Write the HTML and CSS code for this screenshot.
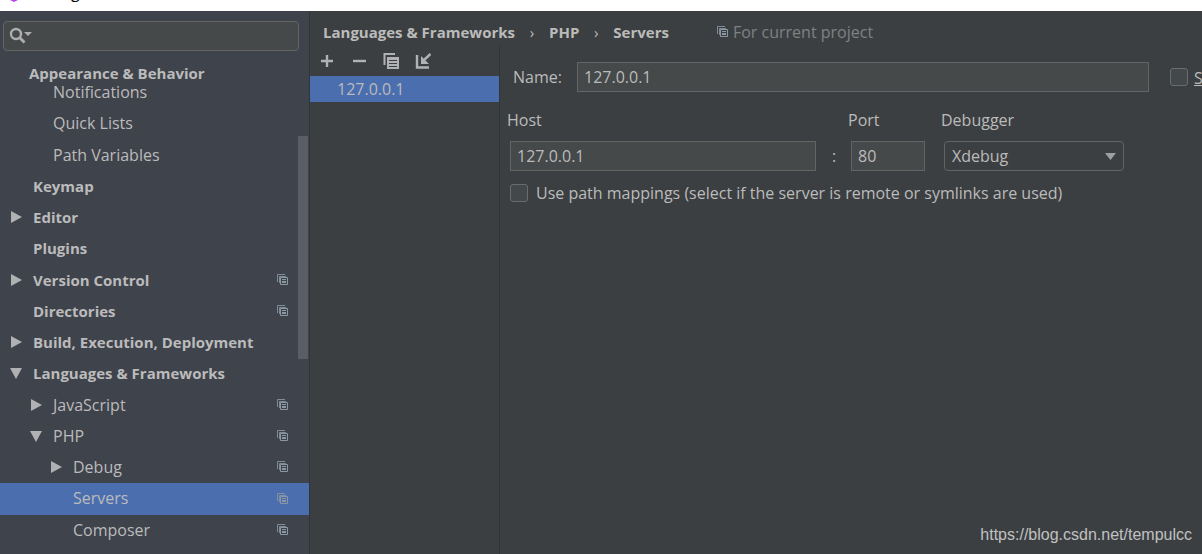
FILE: index.html
```html
<!DOCTYPE html>
<html lang="en">
<head>
<meta charset="utf-8">
<title>Settings</title>
<link rel="stylesheet" href="styles.css">
</head>
<body>
<svg class="defs" width="0" height="0" aria-hidden="true">
  <symbol id="scope" viewBox="0 0 11 11">
    <path d="M.5 8V.5H8M2.500 9V2.500H9" fill="none" stroke="currentColor" opacity=".85"/>
    <path d="M3.500 3.500h7v7h-7z" fill="none" stroke="currentColor"/>
    <path d="M5 5.500h4M5 7.500h4M5 8.500h4" stroke="currentColor"/>
  </symbol>
  <symbol id="closed" viewBox="0 0 12 12"><path d="M1 0v12l11-6z" fill="currentColor"/></symbol>
  <symbol id="open" viewBox="0 0 12 12"><path d="M0 1h12L6 12z" fill="currentColor"/></symbol>
</svg>
<header class="titlebar">
  <svg class="logo" viewBox="0 0 16 16" aria-hidden="true"><path d="M8 0l8 4v8l-8 4-8-4V4z" fill="#b345f1"/></svg>
  <span>Settings</span>
</header>
<div class="window">
  <aside class="sidebar">
    <div class="search">
      <svg width="24" height="18" viewBox="0 0 24 18" aria-hidden="true"><circle cx="7" cy="7" r="5" fill="none" stroke="#adadad" stroke-width="2.400"/><path d="M10.500 10.500l5 5" stroke="#adadad" stroke-width="2.800"/><path d="M15 5h8l-4 4z" fill="#adadad"/></svg>
      <input type="text" aria-label="Search settings">
    </div>
    <h2 class="section">Appearance &amp; Behavior</h2>
    <ul class="tree">
      <li class="row l2"><span class="arrow"></span><span class="name">Notifications</span></li>
      <li class="row l2"><span class="arrow"></span><span class="name">Quick Lists</span></li>
      <li class="row l2"><span class="arrow"></span><span class="name">Path Variables</span></li>
      <li class="row l1"><span class="arrow"></span><span class="name">Keymap</span></li>
      <li class="row l1"><svg class="arrow"><use href="#closed"/></svg><span class="name">Editor</span></li>
      <li class="row l1"><span class="arrow"></span><span class="name">Plugins</span></li>
      <li class="row l1"><svg class="arrow"><use href="#closed"/></svg><span class="name">Version Control</span><svg class="scope"><use href="#scope"/></svg></li>
      <li class="row l1"><span class="arrow"></span><span class="name">Directories</span><svg class="scope"><use href="#scope"/></svg></li>
      <li class="row l1"><svg class="arrow"><use href="#closed"/></svg><span class="name">Build, Execution, Deployment</span></li>
      <li class="row l1"><svg class="arrow"><use href="#open"/></svg><span class="name">Languages &amp; Frameworks</span></li>
      <li class="row l2"><svg class="arrow"><use href="#closed"/></svg><span class="name">JavaScript</span><svg class="scope"><use href="#scope"/></svg></li>
      <li class="row l2"><svg class="arrow"><use href="#open"/></svg><span class="name">PHP</span><svg class="scope"><use href="#scope"/></svg></li>
      <li class="row l3"><svg class="arrow"><use href="#closed"/></svg><span class="name">Debug</span><svg class="scope"><use href="#scope"/></svg></li>
      <li class="row l3 selected"><span class="arrow"></span><span class="name">Servers</span><svg class="scope"><use href="#scope"/></svg></li>
      <li class="row l3"><span class="arrow"></span><span class="name">Composer</span><svg class="scope"><use href="#scope"/></svg></li>
    </ul>
    <div class="scrollbar"></div>
  </aside>
  <main class="content">
    <nav class="crumbs" aria-label="Breadcrumb">
      <span>Languages &amp; Frameworks</span><span class="sep">›</span><span>PHP</span><span class="sep">›</span><span>Servers</span>
      <span class="project"><svg class="scope"><use href="#scope"/></svg>For current project</span>
    </nav>
    <div class="panes">
      <section class="list">
        <div class="toolbar">
          <button type="button" aria-label="Add"><svg viewBox="0 0 16 16"><path d="M8 2v12M2 8h12" stroke="#afb1b3" stroke-width="2.400"/></svg></button>
          <button type="button" aria-label="Remove"><svg viewBox="0 0 16 16"><path d="M2 8h13" stroke="#afb1b3" stroke-width="2.400"/></svg></button>
          <button type="button" aria-label="Copy"><svg viewBox="0 0 16 16"><path d="M1.500 12V1H12" fill="none" stroke="#afb1b3" stroke-width="2"/><path d="M4 4h12v12H4z" fill="#afb1b3"/><path d="M6 7.500h8M6 10.500h8M6 13.500h8" stroke="#3c3f41"/></svg></button>
          <button type="button" aria-label="Import"><svg viewBox="0 0 16 16"><path d="M2 2v12.500H14" fill="none" stroke="#afb1b3" stroke-width="2.400"/><path d="M15.500 1L9 7" stroke="#afb1b3" stroke-width="2.400"/><path d="M6 3v8h8z" fill="#afb1b3"/></svg></button>
        </div>
        <div class="server">127.0.0.1</div>
      </section>
      <form class="form">
        <div class="name-line">
          <label for="name">Name:</label>
          <input class="field" id="name" type="text" value="127.0.0.1">
          <input class="check" id="shared" type="checkbox">
          <label class="shared" for="shared"><u>S</u>hared</label>
        </div>
        <div class="address">
          <label for="host">Host</label><span></span><label for="port">Port</label><label class="dbg" for="debugger">Debugger</label>
          <input class="field" id="host" type="text" value="127.0.0.1"><span class="colon">:</span>
          <input class="field" id="port" type="text" value="80">
          <div class="select dbg"><select id="debugger"><option>Xdebug</option><option>Zend Debugger</option></select><svg viewBox="0 0 11 7" aria-hidden="true"><path d="M0 0h11L5.500 7z" fill="#9da0a3"/></svg></div>
        </div>
        <div class="mapping">
          <input class="check" id="mapping" type="checkbox">
          <label for="mapping">Use path mappings (select if the server is remote or symlinks are used)</label>
        </div>
      </form>
    </div>
  </main>
  <div class="watermark">https://blog.csdn.net/tempulcc</div>
</div>
</body>
</html>
```
FILE: styles.css
```css
* { box-sizing: border-box; }
body {
  margin: 0;
  min-height: 100vh;
  display: flex;
  flex-direction: column;
  background: #3c3f41;
  color: #bbbbbb;
  font: 16px/24px "Open Sans", "Noto Sans", sans-serif;
  overflow: hidden;
}
.defs { position: absolute; }
input, select, button { font: inherit; color: inherit; }
.titlebar {
  height: 11px;
  display: flex;
  align-items: flex-end;
  gap: 6px;
  padding: 0 6px 7px;
  background: #ffffff;
  color: #000000;
  overflow: hidden;
}
.logo { width: 16px; height: 16px; margin-bottom: 2px; flex: none; }
.window { flex: 1; display: flex; position: relative; }
.sidebar {
  flex: 0 0 310px;
  position: relative;
  padding-top: 10px;
  background: #3f434c;
  border-right: 1px solid #323537;
}
.search {
  height: 30px;
  margin: 0 10px 10px 3px;
  padding: 0 5px;
  display: flex;
  align-items: center;
  background: #45494a;
  border: 1px solid #646464;
  border-radius: 4px;
}
.search input { flex: 1; min-width: 0; border: 0; padding: 0; background: none; outline: 0; }
.section {
  position: relative;
  z-index: 1;
  margin: 0 12px -8px 0;
  padding-left: 29px;
  background: #3f434c;
  font-size: 15px;
  line-height: 24px;
}
.tree { list-style: none; margin: 0; padding: 0; }
.row { height: 31px; display: flex; align-items: center; padding: 0 21px 2px 10px; white-space: nowrap; }
.row:nth-child(4n+2) { height: 32px; }
.l1 { font-size: 15px; font-weight: 700; }
.l2 { padding-left: 30px; }
.l3 { padding-left: 50px; }
.selected { background: #4b6eaf; }
.arrow { width: 12px; height: 12px; margin-right: 11px; color: #b0b1b2; flex: none; }
.name { flex: 1; }
.scope { width: 11px; height: 11px; color: #8b98a3; flex: none; }
.scrollbar { position: absolute; right: 1px; top: 125px; width: 10px; height: 223px; background: #5a5d65; }
.content { flex: 1; min-width: 0; display: flex; flex-direction: column; }
.crumbs { height: 35px; padding: 6px 13px 0; display: flex; align-items: center; font-size: 15px; font-weight: 700; white-space: nowrap; }
.sep { width: 34px; text-align: center; font-weight: 400; }
.project { display: flex; align-items: center; gap: 5px; margin-left: 48px; color: #7f8183; font-size: 16px; font-weight: 400; }
.panes { flex: 1; display: flex; }
.list { flex: 0 0 190px; border-right: 1px solid #323537; }
.toolbar { height: 30px; padding-left: 9px; display: flex; align-items: center; gap: 16px; }
.toolbar button { width: 16px; height: 16px; padding: 0; border: 0; background: none; }
.toolbar svg { display: block; width: 16px; height: 16px; }
.server { height: 26px; padding-left: 27px; line-height: 26px; background: #4b6eaf; }
.form { flex: 1; min-width: 0; padding: 16px 0 0 7px; }
.name-line { display: flex; align-items: center; padding-left: 6px; overflow: hidden; }
.name-line label:first-child { flex: 0 0 64px; }
.name-line .field { flex: 1; min-width: 0; }
.name-line .check { margin: 0 6px 0 21px; }
.shared { flex: 0 0 8px; min-width: 0; overflow: hidden; white-space: nowrap; padding-top: 2px; }
.field { height: 30px; padding: 0 6px; background: #45494a; border: 1px solid #646464; border-radius: 0; outline: 0; min-width: 0; }
.address { display: grid; grid-template-columns: minmax(0, 309px) 32px 77px 199px; row-gap: 9px; align-items: center; margin-top: 16px; }
.address .field, .select { margin-left: 3px; }
.colon { text-align: center; padding-left: 4px; }
.dbg { padding-left: 16px; }
.select { position: relative; }
.select select { display: block; width: 100%; height: 30px; padding: 0 7px; appearance: none; background: #3c3f41; border: 1px solid #646464; border-radius: 4px; outline: 0; }
.select svg { position: absolute; right: 8px; top: 12px; width: 11px; height: 7px; pointer-events: none; }
.check { appearance: none; flex: none; width: 18px; height: 18px; margin: 0; background: #43494a; border: 1px solid #6b6b6b; border-radius: 3px; }
.mapping { display: flex; align-items: center; gap: 8px; padding-left: 3px; margin-top: 10px; white-space: nowrap; }
.watermark { position: absolute; right: 10px; bottom: 7px; color: #c0c1c2; font-family: "Liberation Sans", Arial, sans-serif; }
```
